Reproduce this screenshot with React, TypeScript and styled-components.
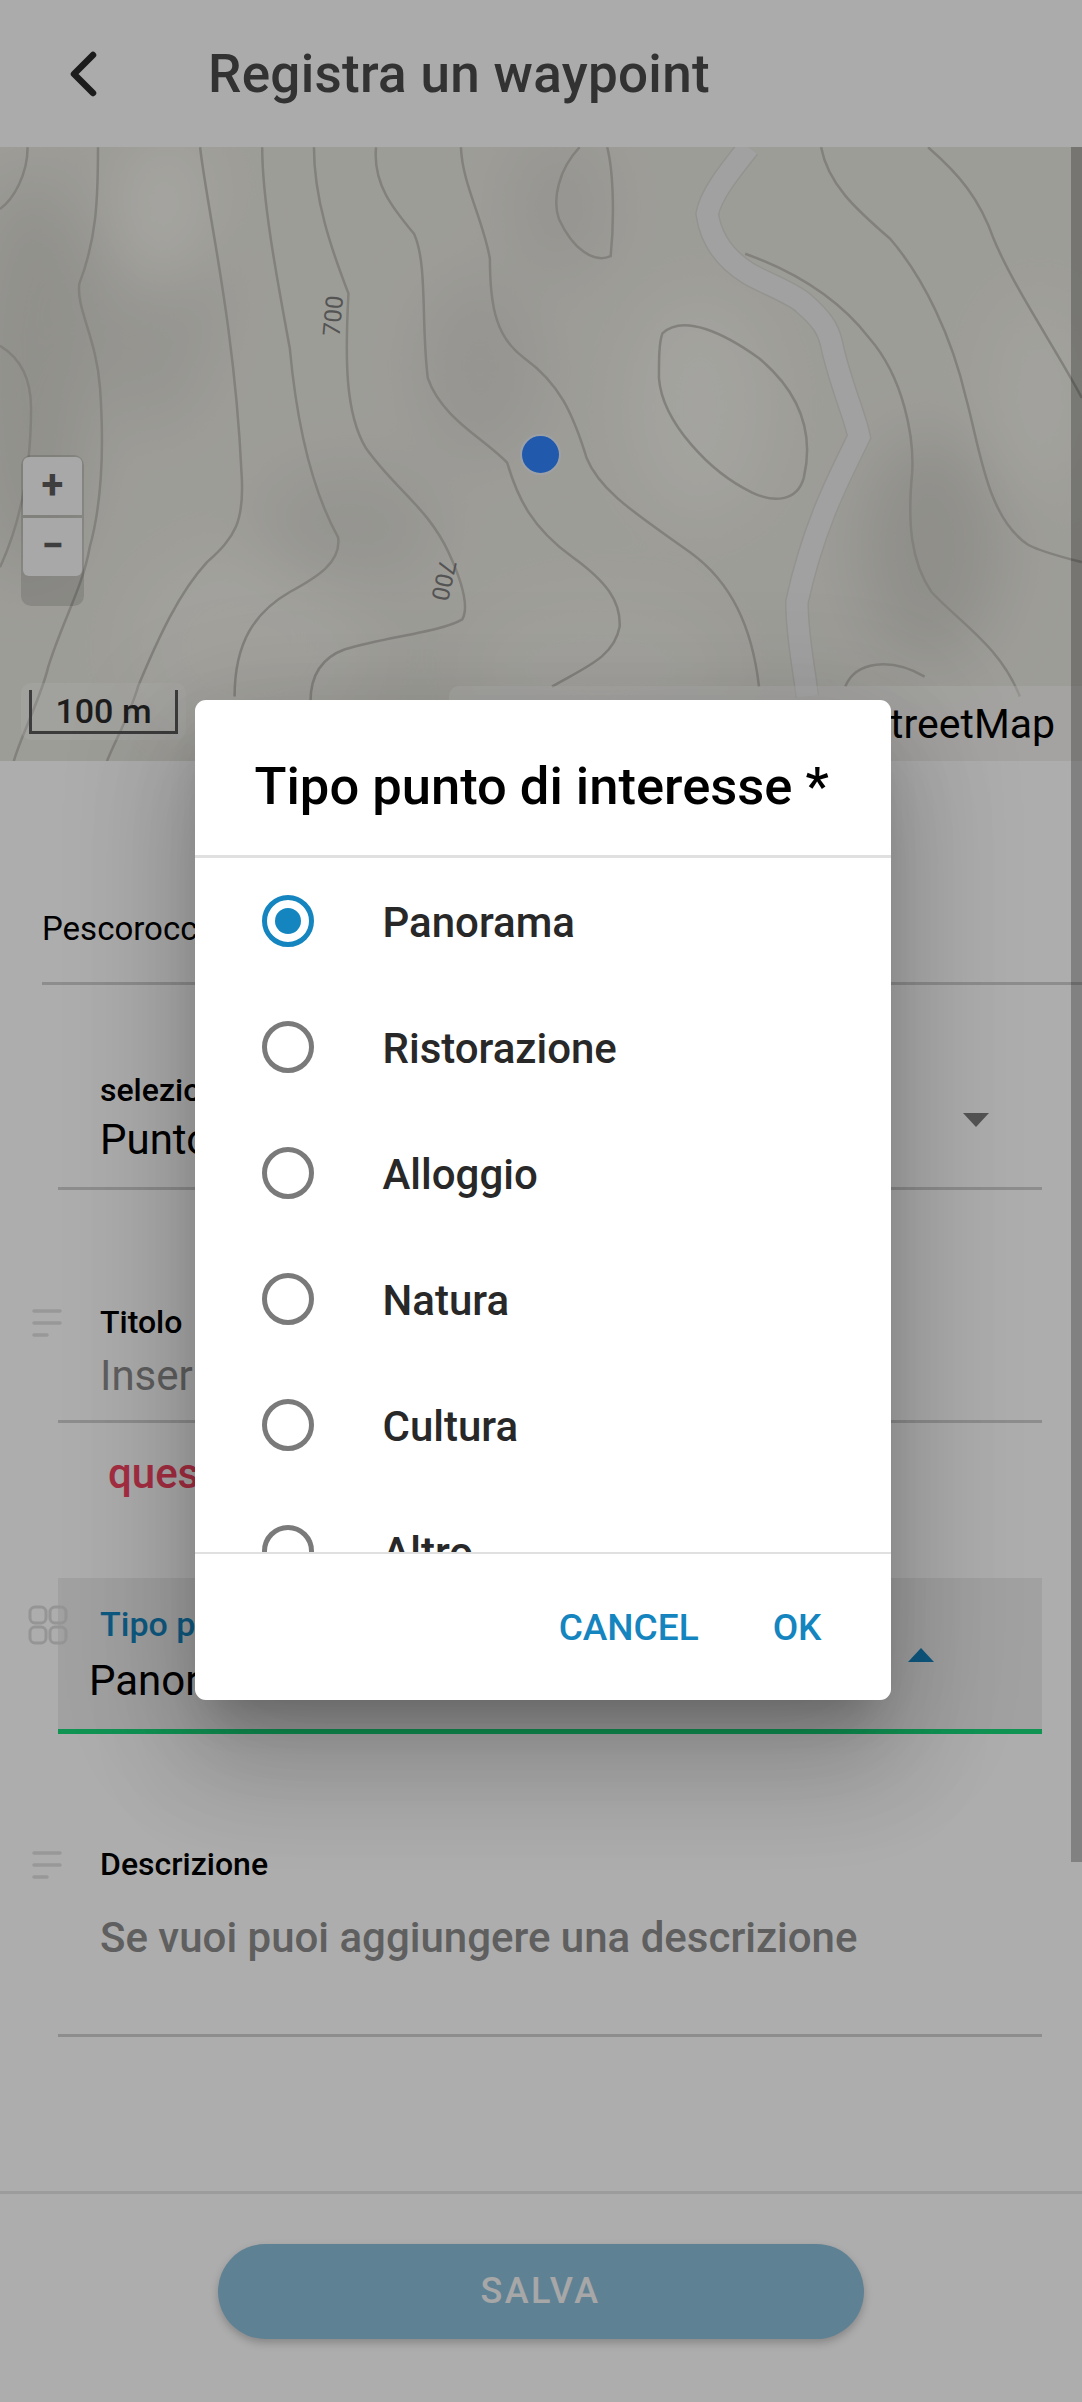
import React from 'react'
import styled, { createGlobalStyle } from 'styled-components'

const GlobalStyle = createGlobalStyle`
  html, body {
    margin: 0;
    padding: 0;
    background: #fff;
    font-family: Roboto, "Liberation Sans", sans-serif;
  }
  * {
    box-sizing: border-box;
  }
`

const Page = styled.div`
  position: relative;
  width: 1082px;
  height: 2402px;
  display: flex;
  flex-direction: column;
  overflow: hidden;
  background: #ffffff;
`

const Header = styled.header`
  height: 147px;
  flex: none;
  display: flex;
  align-items: center;
  background: #fcfcfc;
  padding-left: 66px;
  gap: 108px;
`

const BackIcon = styled.svg`
  width: 34px;
  height: 48px;
  flex: none;
`

const Title = styled.h1`
  margin: 0;
  font-size: 53px;
  font-weight: 500;
  color: #4a4a4a;
  letter-spacing: 0.3px;
`

const MapArea = styled.div`
  position: relative;
  height: 614px;
  flex: none;
  overflow: hidden;
  background: #e8e7e0;
`

const MapSvg = styled.svg`
  display: block;
  width: 1082px;
  height: 614px;
`

const Marker = styled.div`
  position: absolute;
  left: 520px;
  top: 287px;
  width: 41px;
  height: 41px;
  border-radius: 50%;
  background: #3284ff;
  border: 2px solid #e8eef5;
`

const ZoomBox = styled.div`
  position: absolute;
  left: 21px;
  top: 308px;
  width: 63px;
  height: 151px;
  border-radius: 10px;
  background: rgba(0, 0, 0, 0.12);
  padding: 2px;
  display: flex;
  flex-direction: column;
  gap: 3px;
`

const ZoomButton = styled.div<{ $bottom?: boolean }>`
  height: 58px;
  background: #f8f8f8;
  border-radius: ${({ $bottom }) => ($bottom ? '0 0 6px 6px' : '6px 6px 0 0')};
  color: #5c5c5c;
  font-size: 40px;
  font-weight: 700;
  line-height: 56px;
  text-align: center;
`

const ScaleBox = styled.div`
  position: absolute;
  left: 21px;
  top: 536px;
  width: 165px;
  height: 57px;
  border-radius: 10px;
  background: rgba(255, 255, 255, 0.25);
  padding: 7px 8px 6px;
`

const ScaleLine = styled.div`
  height: 44px;
  border: 3px solid #5a5a5a;
  border-top: none;
  text-align: center;
  font-size: 34px;
  font-weight: 500;
  line-height: 43px;
  color: #2c2c2c;
`

const Attribution = styled.div`
  position: absolute;
  right: 0;
  bottom: 0;
  width: 633px;
  height: 75px;
  border-top-left-radius: 10px;
  background: rgba(255, 255, 255, 0.42);
  padding-right: 27px;
  text-align: right;
  font-size: 41px;
  line-height: 76px;
  color: #000;
`

const Form = styled.main`
  flex: 1;
  display: flex;
  flex-direction: column;
`

const LocationRow = styled.div`
  height: 224px;
  margin-left: 42px;
  padding-top: 148px;
  border-bottom: 3px solid #d0d0d0;
  font-size: 33px;
  color: #000;
`

const FieldWrap = styled.div<{ $top: number }>`
  position: relative;
  margin: ${({ $top }) => $top}px 40px 0 58px;
`

const Field = styled.div<{ $height: number; $active?: boolean }>`
  height: ${({ $height }) => $height}px;
  padding-left: 42px;
  display: flex;
  flex-direction: column;
  background: ${({ $active }) => ($active ? '#ededed' : 'transparent')};
  border-bottom: ${({ $active }) => ($active ? '5px solid #19da7d' : '3px solid #d0d0d0')};
`

const FieldLabel = styled.div<{ $top: number; $active?: boolean }>`
  margin-top: ${({ $top }) => $top}px;
  font-size: ${({ $active }) => ($active ? 34 : 32)}px;
  font-weight: 500;
  line-height: 38px;
  color: ${({ $active }) => ($active ? '#1585c0' : '#000')};
`

const FieldValue = styled.div<{ $shift?: number; $top: number }>`
  margin-left: ${({ $shift }) => $shift ?? 0}px;
  margin-top: ${({ $top }) => $top}px;
  font-size: 42px;
  line-height: 50px;
  color: #000;
`

const Placeholder = styled.div<{ $top: number; $medium?: boolean }>`
  margin-top: ${({ $top }) => $top}px;
  font-size: 42px;
  line-height: 50px;
  font-weight: ${({ $medium }) => ($medium ? 500 : 400)};
  color: #8c8c8c;
`

const ErrorText = styled.div`
  margin: 27px 0 0 108px;
  height: 48px;
  font-size: 42px;
  font-weight: 500;
  line-height: 48px;
  color: #f54562;
`

const Caret = styled.div<{ $up?: boolean; $x: number; $y: number; $color: string }>`
  position: absolute;
  left: ${({ $x }) => $x}px;
  top: ${({ $y }) => $y}px;
  width: 0;
  height: 0;
  border-left: 13px solid transparent;
  border-right: 13px solid transparent;
  ${({ $up, $color }) =>
    $up ? `border-bottom: 14px solid ${$color};` : `border-top: 14px solid ${$color};`}
`

const SideIcon = styled.svg<{ $x: number; $y: number }>`
  position: absolute;
  left: ${({ $x }) => $x}px;
  top: ${({ $y }) => $y}px;
  width: 40px;
  height: 40px;
`

const Footer = styled.footer`
  height: 211px;
  flex: none;
  border-top: 3px solid #e6e6e6;
  display: flex;
  justify-content: center;
  padding-top: 50px;
  padding-right: 1px;
`

const SaveButton = styled.div`
  width: 646px;
  height: 95px;
  border-radius: 48px;
  background: #8cbfdb;
  box-shadow: 0 4px 8px rgba(0, 0, 0, 0.22);
  color: #f6f6f6;
  font-size: 36px;
  font-weight: 500;
  letter-spacing: 2.5px;
  line-height: 95px;
  text-align: center;
`

const Scrollbar = styled.div`
  position: absolute;
  right: 0;
  top: 147px;
  width: 11px;
  height: 1715px;
  background: rgba(0, 0, 0, 0.25);
`

const Backdrop = styled.div`
  position: absolute;
  inset: 0;
  background: rgba(0, 0, 0, 0.32);
  display: flex;
  justify-content: center;
  align-items: flex-start;
  padding: 700px 0 0 3px;
`

const Dialog = styled.div`
  width: 696px;
  height: 1000px;
  background: #fff;
  border-radius: 11px;
  display: flex;
  flex-direction: column;
  overflow: hidden;
`

const DialogShadow = styled.div`
  border-radius: 11px;
  box-shadow: 0 30px 41px -19px rgba(0, 0, 0, 0.2), 0 66px 105px 8px rgba(0, 0, 0, 0.14),
    0 25px 126px 22px rgba(0, 0, 0, 0.12);
`

const DialogTitle = styled.div`
  height: 158px;
  flex: none;
  padding: 54px 0 0 60px;
  border-bottom: 3px solid #e0e0e0;
  font-size: 52.5px;
  font-weight: 500;
  line-height: 64px;
  color: #000;
`

const OptionList = styled.div`
  flex: 1;
  overflow: hidden;
`

const Option = styled.div`
  height: 126px;
  display: flex;
  align-items: center;
  padding-left: 67px;
  gap: 69px;
`

const Radio = styled.div<{ $checked?: boolean }>`
  width: 52px;
  height: 52px;
  flex: none;
  border-radius: 50%;
  border: 5px solid ${({ $checked }) => ($checked ? '#1585c0' : '#7a7a7a')};
  display: flex;
  align-items: center;
  justify-content: center;
  &::after {
    content: '';
    display: ${({ $checked }) => ($checked ? 'block' : 'none')};
    width: 26px;
    height: 26px;
    border-radius: 50%;
    background: #1585c0;
  }
`

const OptionLabel = styled.div`
  padding-top: 3px;
  font-size: 42px;
  font-weight: 500;
  color: #282828;
`

const DialogActions = styled.div`
  height: 148px;
  flex: none;
  border-top: 2px solid #e0e0e0;
  display: flex;
  justify-content: flex-end;
  gap: 74px;
  padding: 51px 69px 0 0;
`

const ActionButton = styled.div`
  font-size: 37px;
  font-weight: 500;
  line-height: 46px;
  color: #1585c0;
`

const contours = [
  'M40 296 C40 350 20 400 0 420',
  'M142 296 C142 400 140 480 115 570 C110 620 140 680 145 780 C150 880 150 1000 130 1100 C120 1180 90 1250 70 1340 C60 1400 30 1480 20 1530',
  'M0 695 C30 720 45 760 45 820 C45 950 30 1050 0 1140',
  'M290 296 C300 420 340 650 350 950 C355 1050 340 1080 300 1130 C260 1190 230 1280 200 1380 C190 1430 170 1480 155 1530',
  'M380 296 C380 400 400 550 420 700 C430 850 450 980 490 1080 C495 1130 460 1160 420 1190 C370 1230 340 1290 340 1400',
  'M455 296 C455 400 480 500 505 590 C500 720 500 830 530 900 C570 980 620 1020 650 1110 C670 1170 680 1220 670 1245 C640 1270 560 1280 500 1305 C470 1320 450 1350 450 1410',
  'M545 296 C540 370 570 420 600 470 C620 530 610 650 620 760 C640 840 700 880 735 930 C750 1000 770 1060 830 1120 C880 1170 900 1210 898 1260 C890 1320 850 1340 800 1380',
  'M668 296 C670 370 700 440 710 520 C710 620 720 680 760 720 C810 770 830 830 850 920 C870 990 930 1040 1000 1110 C1060 1170 1090 1260 1100 1380',
  'M840 296 C810 340 800 400 810 440 C830 500 860 530 885 515 C890 450 890 350 880 296',
  'M960 670 C990 630 1050 670 1100 720 C1160 790 1180 870 1165 960 C1155 1010 1120 1010 1090 990 C1030 950 960 850 955 760 C955 720 955 690 960 670Z',
  'M1190 296 C1200 370 1240 420 1290 480 C1340 560 1380 680 1400 800 C1420 900 1430 1040 1490 1095 C1510 1110 1540 1120 1568 1130',
  'M1345 296 C1390 350 1420 400 1440 480 C1470 580 1530 700 1568 800',
  'M1080 510 C1140 540 1210 590 1260 680 C1310 760 1325 880 1322 950 C1315 1050 1320 1130 1350 1190 C1390 1250 1450 1300 1478 1400',
  'M1225 1380 C1240 1330 1290 1320 1340 1360',
]

const road =
  'M1085 296 C1060 340 1030 390 1025 430 C1030 480 1050 520 1085 550 C1110 570 1150 590 1165 610 C1190 640 1200 660 1205 690 C1215 760 1240 840 1245 878 C1220 950 1180 1050 1155 1210 C1155 1280 1165 1340 1170 1400'

const patches = [
  { cx: 150, cy: 120, rx: 70, ry: 160, fill: '#dddcd5' },
  { cx: 160, cy: 60, rx: 50, ry: 80, fill: '#f4f3ec' },
  { cx: 250, cy: 500, rx: 120, ry: 100, fill: '#f0efe8' },
  { cx: 30, cy: 230, rx: 60, ry: 200, fill: '#d6d5ce' },
  { cx: 700, cy: 260, rx: 70, ry: 110, fill: '#f2f1ea' },
  { cx: 480, cy: 220, rx: 60, ry: 90, fill: '#dedcd6' },
  { cx: 350, cy: 380, rx: 90, ry: 60, fill: '#dddcd5' },
  { cx: 930, cy: 400, rx: 70, ry: 110, fill: '#d4d3cc' },
  { cx: 560, cy: 60, rx: 50, ry: 70, fill: '#dedcd6' },
  { cx: 1040, cy: 250, rx: 50, ry: 100, fill: '#f0efe8' },
  { cx: 600, cy: 520, rx: 130, ry: 70, fill: '#efeee7' },
]

const TerrainMap = () => (
  <MapSvg viewBox="0 147 1082 614">
    <defs>
      <filter id="soft" x="-50%" y="-50%" width="200%" height="200%">
        <feGaussianBlur stdDeviation="30" />
      </filter>
    </defs>
    <g transform="translate(0 147)" filter="url(#soft)">
      {patches.map((p) => (
        <ellipse key={`${p.cx}-${p.cy}`} {...p} />
      ))}
    </g>
    <g transform="scale(0.69 0.4975)" fill="none">
      {contours.map((d) => (
        <path key={d} d={d} stroke="#c0beb7" strokeWidth="2.5" vectorEffect="non-scaling-stroke" />
      ))}
      <path d={road} stroke="#dad9d4" strokeWidth="24" vectorEffect="non-scaling-stroke" />
      <path d={road} stroke="#eeeeee" strokeWidth="21" vectorEffect="non-scaling-stroke" />
    </g>
    <text x="335" y="316" fontSize="24" fill="#7c7c7c" textAnchor="middle" transform="rotate(-85 335 316)" dominantBaseline="middle">
      700
    </text>
    <text x="442" y="580" fontSize="24" fill="#7c7c7c" textAnchor="middle" transform="rotate(103 442 580)" dominantBaseline="middle">
      700
    </text>
  </MapSvg>
)

const LinesIcon = ({ x, y }: { x: number; y: number }) => (
  <SideIcon $x={x} $y={y} viewBox="0 0 40 40" fill="none" stroke="#e0e0e0" strokeWidth="3.5" strokeLinecap="round">
    <path d="M7 8H33M7 20H33M7 32H20" />
  </SideIcon>
)

const GridIcon = ({ x, y }: { x: number; y: number }) => (
  <SideIcon $x={x} $y={y} viewBox="0 0 40 40" fill="none" stroke="#dcdcdc" strokeWidth="3">
    <rect x="2" y="2" width="16" height="16" rx="5" />
    <rect x="22" y="2" width="16" height="16" rx="5" />
    <rect x="2" y="22" width="16" height="16" rx="5" />
    <rect x="22" y="22" width="16" height="16" rx="5" />
  </SideIcon>
)

const options = ['Panorama', 'Ristorazione', 'Alloggio', 'Natura', 'Cultura', 'Altro']

const App = () => {
  return (
    <Page>
      <GlobalStyle />
      <Header>
        <BackIcon viewBox="0 0 34 48" fill="none" stroke="#2a2a2a" strokeWidth="6.5" strokeLinecap="round" strokeLinejoin="round">
          <path d="M27 5L8 24L27 43" />
        </BackIcon>
        <Title>Registra un waypoint</Title>
      </Header>

      <MapArea>
        <TerrainMap />
        <Marker />
        <ZoomBox>
          <ZoomButton>+</ZoomButton>
          <ZoomButton $bottom>−</ZoomButton>
        </ZoomBox>
        <ScaleBox>
          <ScaleLine>100 m</ScaleLine>
        </ScaleBox>
        <Attribution>© Webmapp © OpenStreetMap</Attribution>
      </MapArea>

      <Form>
        <LocationRow>Pescorocchiano</LocationRow>

        <FieldWrap $top={0}>
          <Field $height={205}>
            <FieldLabel $top={86}>seleziona</FieldLabel>
            <FieldValue $top={6}>Punto di interesse</FieldValue>
          </Field>
          <Caret $x={905} $y={128} $color="#7d7d7d" />
        </FieldWrap>

        <FieldWrap $top={0}>
          <Field $height={233}>
            <FieldLabel $top={113}>Titolo</FieldLabel>
            <Placeholder $top={10}>Inserisci un titolo</Placeholder>
          </Field>
          <LinesIcon x={-31} y={113} />
        </FieldWrap>

        <ErrorText>questo campo è obbligatorio</ErrorText>

        <FieldWrap $top={80}>
          <Field $height={156} $active>
            <FieldLabel $top={27} $active>
              Tipo punto
            </FieldLabel>
            <FieldValue $shift={-11} $top={13}>
              Panorama
            </FieldValue>
          </Field>
          <Caret $up $x={850} $y={70} $color="#1585c0" />
          <GridIcon x={-30} y={27} />
        </FieldWrap>

        <FieldWrap $top={0}>
          <Field $height={303}>
            <FieldLabel $top={111}>Descrizione</FieldLabel>
            <Placeholder $top={30} $medium>
              Se vuoi puoi aggiungere una descrizione
            </Placeholder>
          </Field>
          <LinesIcon x={-31} y={111} />
        </FieldWrap>
      </Form>

      <Footer>
        <SaveButton>SALVA</SaveButton>
      </Footer>

      <Scrollbar />

      <Backdrop>
        <DialogShadow>
          <Dialog>
            <DialogTitle>Tipo punto di interesse *</DialogTitle>
            <OptionList>
              {options.map((name, i) => (
                <Option key={name}>
                  <Radio $checked={i === 0} />
                  <OptionLabel>{name}</OptionLabel>
                </Option>
              ))}
            </OptionList>
            <DialogActions>
              <ActionButton>CANCEL</ActionButton>
              <ActionButton>OK</ActionButton>
            </DialogActions>
          </Dialog>
        </DialogShadow>
      </Backdrop>
    </Page>
  )
}

export default App
